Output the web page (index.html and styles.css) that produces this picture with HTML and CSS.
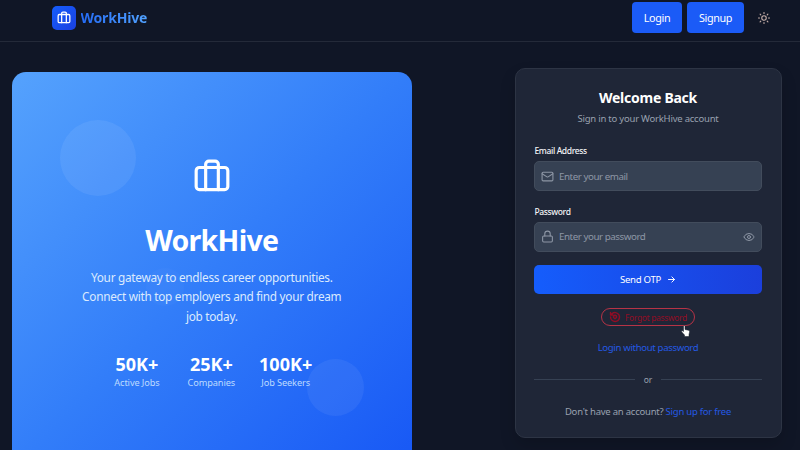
FILE: index.html
```html
<!DOCTYPE html>
<html lang="en">
<head>
<meta charset="utf-8">
<title>WorkHive</title>
<link rel="stylesheet" href="styles.css">
</head>
<body>
<header class="nav">
  <div class="brand">
    <span class="brand-mark"><svg class="icon" width="14" height="14" viewBox="0 0 24 24" stroke-width="2.2"><path d="M16 20V4a2 2 0 0 0-2-2h-4a2 2 0 0 0-2 2v16"/><rect x="2" y="6" width="20" height="14" rx="2"/></svg></span>
    <span class="brand-name">WorkHive</span>
  </div>
  <nav class="actions">
    <a class="btn login">Login</a>
    <a class="btn signup">Signup</a>
    <svg class="icon sun" width="12" height="12" viewBox="0 0 24 24" stroke-width="2.2"><circle cx="12" cy="12" r="4.5"/><path d="M12 1v2M12 21v2M4.2 4.2l1.4 1.4M18.4 18.4l1.4 1.4M1 12h2M21 12h2M4.2 19.8l1.4-1.4M18.4 5.6l1.4-1.4"/></svg>
  </nav>
</header>
<main class="page">
  <section class="hero">
    <span class="bubble one"></span><span class="bubble two"></span><span class="bubble three"></span>
    <svg class="icon hero-icon" width="38" height="38" viewBox="0 0 24 24" stroke-width="2"><path d="M16 20V4a2 2 0 0 0-2-2h-4a2 2 0 0 0-2 2v16"/><rect x="2" y="6" width="20" height="14" rx="2"/></svg>
    <h1>WorkHive</h1>
    <p class="lead">Your gateway to endless career opportunities.<br>Connect with top employers and find your dream<br>job today.</p>
    <div class="stats">
      <div class="stat"><b>50K+</b><span>Active Jobs</span></div>
      <div class="stat"><b>25K+</b><span>Companies</span></div>
      <div class="stat"><b>100K+</b><span>Job Seekers</span></div>
    </div>
  </section>
  <section class="card">
    <h2>Welcome Back</h2>
    <p class="sub">Sign in to your WorkHive account</p>
    <label>Email Address</label>
    <div class="field">
      <svg class="icon" width="13" height="13" viewBox="0 0 24 24" stroke-width="2"><rect x="2" y="4" width="20" height="16" rx="2"/><path d="m22 7-8.97 5.7a2 2 0 0 1-2.06 0L2 7"/></svg>
      <span>Enter your email</span>
    </div>
    <label>Password</label>
    <div class="field">
      <svg class="icon" width="13" height="13" viewBox="0 0 24 24" stroke-width="2"><rect x="3" y="11" width="18" height="11" rx="2"/><path d="M7 11V7a5 5 0 0 1 10 0v4"/></svg>
      <span>Enter your password</span>
      <svg class="icon eye" width="12" height="12" viewBox="0 0 24 24" stroke-width="2"><path d="M2.06 12.35a1 1 0 0 1 0-.7 10.75 10.75 0 0 1 19.88 0 1 1 0 0 1 0 .7 10.75 10.75 0 0 1-19.88 0"/><circle cx="12" cy="12" r="3"/></svg>
    </div>
    <button class="send"><span>Send OTP</span><svg class="icon" width="9" height="9" viewBox="0 0 24 24" stroke-width="2.6"><path d="M4 12h16M13 5l7 7-7 7"/></svg></button>
    <a class="forgot">
      <svg class="icon" width="12" height="12" viewBox="0 0 24 24" stroke-width="2.8"><path d="M3 12a9 9 0 1 0 3-6.7L3 8M3 3v5h5"/><path d="M9 10l3-1.5 3 1.5v3l-3 2.5-3-2.5z"/></svg>
      <span>Forgot password</span>
      <svg class="cursor" width="9" height="12" viewBox="0 0 18 24"><path d="M5 2.5c0-2 3-2 3 0V9l7 1.5c2 .5 2.5 2 2 4L16 19v4H7v-3l-5.5-6c-1.5-2 .5-3.5 2-2L5 13z" fill="#fff" stroke="#111827" stroke-width="1"/></svg>
    </a>
    <a class="without">Login without password</a>
    <div class="divider"><span>or</span></div>
    <p class="join"><span>Don't have an account?</span> <a>Sign up for free</a></p>
  </section>
</main>
</body>
</html>
```
FILE: styles.css
```css
* { box-sizing: border-box; }
body { margin: 0; width: 800px; height: 450px; overflow: hidden; background: #101626; color: #fff; font-family: "Noto Sans", "Open Sans", sans-serif; font-size: 9.5px; }
h1, h2, p { margin: 0; }
.icon { fill: none; stroke: currentColor; stroke-linecap: round; stroke-linejoin: round; flex: none; }
.nav { height: 42px; border-bottom: 1px solid #242a39; display: flex; justify-content: space-between; padding: 0 30px 0 52px; }
.brand { display: flex; align-items: center; gap: 4.5px; height: 35px; }
.brand-mark { width: 24px; height: 24px; border-radius: 5px; background: linear-gradient(135deg, #155dfc, #1a40e0); display: flex; align-items: center; justify-content: center; }
.brand-name { font-size: 14px; line-height: 20px; margin-top: 1px; font-weight: 700; background: linear-gradient(90deg, #246bf5, #51a2ff); -webkit-background-clip: text; background-clip: text; color: transparent; letter-spacing: -.2px; }
.actions { display: flex; align-items: center; height: 35px; }
.btn { height: 31px; border-radius: 4px; background: #1b5bf7; font-size: 10.8px; display: flex; align-items: center; justify-content: center; letter-spacing: -.35px; }
.login { width: 50px; margin-right: 5px; }
.signup { width: 57px; margin-right: 14px; }
.sun { color: #c6afa9; }
.page { height: 408px; overflow: hidden; display: flex; align-items: flex-start; padding: 26px 18px 0 12px; justify-content: space-between; }
.hero { position: relative; width: 399.5px; height: 402px; margin-top: 4px; border-radius: 14px; background: linear-gradient(135deg, #55a2fd, #327df9 50%, #1757f5); display: flex; flex-direction: column; align-items: center; padding-top: 86px; }
.bubble { position: absolute; border-radius: 50%; background: rgba(255,255,255,.07); }
.one { left: 48px; top: 48px; width: 76px; height: 76px; }
.two { left: 295px; top: 287px; width: 57px; height: 57px; background: rgba(255,255,255,.06); }
.three { left: 134px; top: 196px; width: 38px; height: 38px; background: rgba(255,255,255,.025); }
.hero-icon { position: relative; }
h1 { position: relative; margin-top: 24px; font-size: 28.5px; line-height: 40px; font-weight: 700; letter-spacing: -.7px; }
.lead { position: relative; margin-top: 8px; font-size: 11.8px; line-height: 19.4px; letter-spacing: -.28px; color: #dbeafe; text-align: center; white-space: nowrap; }
.stats { position: relative; display: flex; margin-top: 26px; margin-left: 3px; }
.stat { display: flex; flex-direction: column; align-items: center; white-space: nowrap; }
.stat + .stat { margin-left: 28px; }
.stat + .stat + .stat { margin-left: 24px; }
.stat b { font-size: 18px; line-height: 24px; }
.stat span { font-size: 9.2px; line-height: 13px; letter-spacing: -.1px; color: #bedbff; }
.card { width: 267px; height: 370px; border: 1px solid #2d3444; border-radius: 10px; background: #1f2637; padding: 19px 19px 0 18px; display: flex; flex-direction: column; box-shadow: 0 8px 16px rgba(0,0,0,.15); }
h2 { font-size: 14px; line-height: 20px; letter-spacing: -.25px; text-align: center; }
.sub { margin-top: 4px; font-size: 9.5px; line-height: 14px; letter-spacing: -.22px; text-align: center; color: #99a1af; }
label { font-size: 8.5px; line-height: 12px; letter-spacing: -.38px; font-weight: 500; margin-top: 19px; padding-left: .5px; color: #f3f4f6; }
.field { height: 30px; margin-top: 4px; border: 1px solid #424c5c; border-radius: 5px; background: #364153; display: flex; align-items: center; padding: 0 6px; gap: 5px; color: #8d96a5; font-size: 9.8px; letter-spacing: -.46px; }
.field + label { margin-top: 14.5px; }
.eye { margin-left: auto; }
.send { height: 29px; margin-top: 13.5px; border: 0; border-radius: 5px; background: linear-gradient(90deg, #155dfc, #1b3fdc); color: #fff; font: 9.6px "Noto Sans", sans-serif; letter-spacing: -.3px; display: flex; align-items: center; justify-content: center; gap: 6px; flex: none; }
.forgot { position: relative; align-self: center; width: 94px; height: 18px; margin-top: 14px; border: 1px solid #b63346; border-radius: 9px; display: flex; align-items: center; gap: 4px; padding-left: 7px; color: #910d25; font-size: 8.5px; letter-spacing: -.35px; white-space: nowrap; }
.cursor { position: absolute; left: 79px; top: 16px; }
.without { margin-top: 15px; font-size: 9.6px; line-height: 14px; letter-spacing: -.34px; color: #2459e4; text-align: center; }
.divider { margin-top: 17.5px; display: flex; align-items: center; gap: 9px; font-size: 8.5px; line-height: 14px; color: #99a1af; }
.divider::before, .divider::after { content: ""; height: 1px; flex: 1; background: #364153; margin-top: -1px; }
.join { margin-top: 18.5px; font-size: 9.5px; line-height: 14px; letter-spacing: -.23px; color: #99a1af; text-align: center; white-space: nowrap; }
.join a { color: #2459e4; }
```
